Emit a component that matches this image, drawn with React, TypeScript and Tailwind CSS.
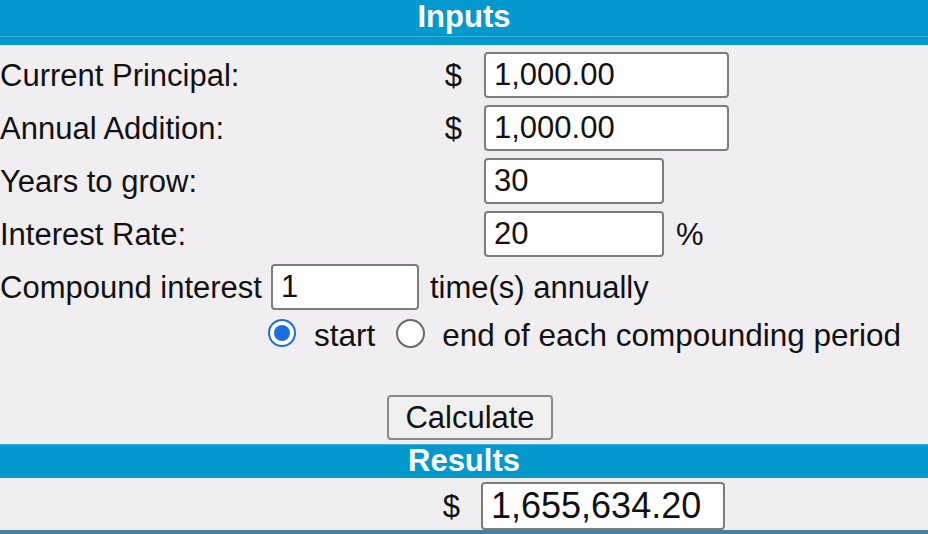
import React, { FunctionComponent } from "react";

const inputClass =
  "h-[46px] border-2 border-[#7d7d7d] rounded-[4px] bg-white pl-[8px] text-[#111] outline-none";

const SectionBar: FunctionComponent<{ title: string; tall?: boolean }> = ({ title, tall }) => (
  <div className="bg-[#0399cc] text-white font-bold text-center">
    {tall ? (
      <>
        <div className="h-[36px] leading-[34px]">{title}</div>
        <div className="h-px bg-[#3cb0dc]" />
        <div className="h-[8px]" />
      </>
    ) : (
      <>
        <div className="h-px bg-[#3cb0dc]" />
        <div className="h-[33px] leading-[32px]">{title}</div>
      </>
    )}
  </div>
);

const App: FunctionComponent = () => {
  const moneyRows = [
    { label: "Current Principal:", value: "1,000.00" },
    { label: "Annual Addition:", value: "1,000.00" },
  ];

  return (
    <div className="w-[928px] h-[534px] overflow-hidden bg-[#f0eef1] text-[31px] text-[#111] font-['Liberation_Sans',Arial,sans-serif] leading-none">
      <SectionBar title="Inputs" tall />

      <div className="flex flex-col gap-[7px] pt-[7px]">
        {moneyRows.map((row, index) => (
          <div key={index} className="flex items-center h-[46px]">
            <div className="w-[484px] flex justify-between pr-[22px]">
              <span>{row.label}</span>
              <span>$</span>
            </div>
            <input className={`${inputClass} w-[245px]`} defaultValue={row.value} />
          </div>
        ))}

        <div className="flex items-center h-[46px]">
          <div className="w-[484px]">Years to grow:</div>
          <input className={`${inputClass} w-[180px]`} defaultValue="30" />
        </div>

        <div className="flex items-center h-[46px]">
          <div className="w-[484px]">Interest Rate:</div>
          <input className={`${inputClass} w-[180px]`} defaultValue="20" />
          <span className="ml-[12px]">%</span>
        </div>

        <div className="flex items-center h-[46px]">
          <span>Compound interest</span>
          <input className={`${inputClass} w-[148px] ml-[9px]`} defaultValue="1" />
          <span className="ml-[11px]">time(s) annually</span>
        </div>
      </div>

      {/* start / end of period radios */}
      <div className="flex items-center h-[40px] mt-[3px] pl-[268px] text-[31.5px]">
        <span className="w-[28px] h-[28px] rounded-full border-2 border-[#1a6fe0] bg-white flex items-center justify-center">
          <span className="w-[16px] h-[16px] rounded-full bg-[#1a6fe0]" />
        </span>
        <span className="ml-[18px] pt-[6px]">start</span>
        <span className="ml-[21px] w-[29px] h-[29px] rounded-full border-2 border-[#6a6a6a] bg-white" />
        <span className="ml-[17px] pt-[6px]">end of each compounding period</span>
      </div>

      <div className="pl-[387px] mt-[42px]">
        <button className="w-[166px] h-[45px] border-2 border-[#8a8a8a] rounded-[4px] bg-[#f0f0f0] text-[31px]">
          Calculate
        </button>
      </div>

      <div className="mt-[4px]">
        <SectionBar title="Results" />
      </div>

      <div className="flex items-center h-[52px] pt-[4px]">
        <div className="w-[481px] flex justify-end pr-[21px]">
          <span>$</span>
        </div>
        <input
          className={`${inputClass} w-[244px] h-[48px] text-[36px]`}
          defaultValue="1,655,634.20"
        />
      </div>
      <div className="h-[4px] bg-[#4f7c98]" />
    </div>
  );
};

export default App;
